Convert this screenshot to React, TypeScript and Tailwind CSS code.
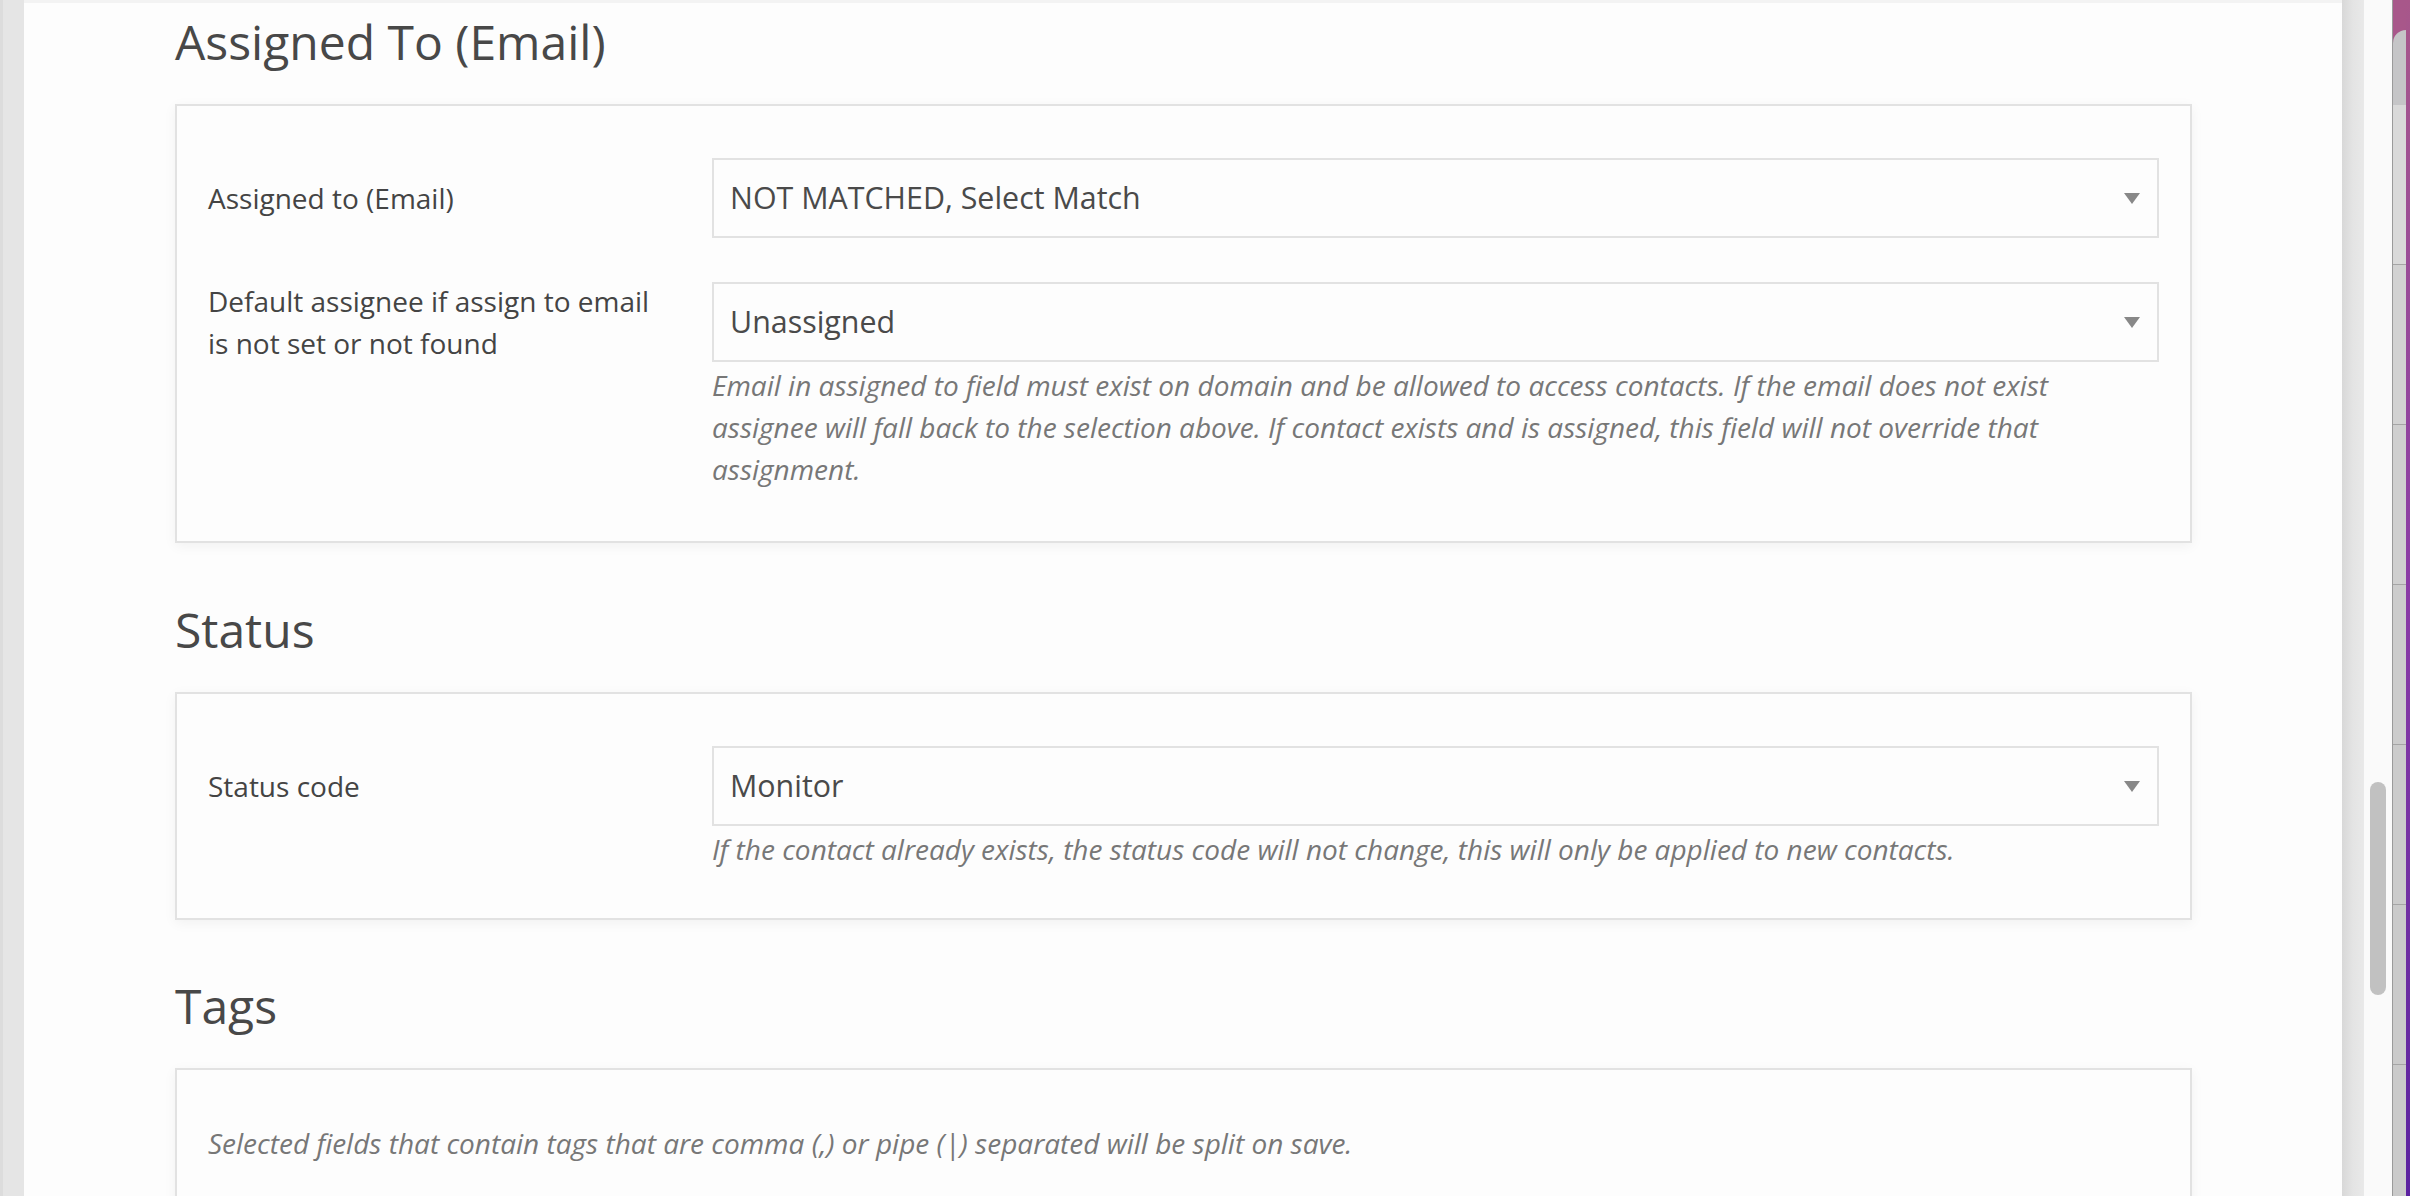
import React from "react";

const Arrow = () => (
  <svg width="16" height="11" viewBox="0 0 16 11" className="shrink-0">
    <path d="M0 0H16L8 11Z" fill="#888888" />
  </svg>
);

function Select({ value }: { value: string }) {
  return (
    <div className="flex h-[80px] items-center justify-between border-2 border-[#e2e2e2] bg-[#fdfdfd] pl-[16px] pr-[17px] text-[30.4px] text-[#4a4a4a]">
      <span>{value}</span>
      <Arrow />
    </div>
  );
}

function Row({
  label,
  value,
  help,
}: {
  label: React.ReactNode;
  value: string;
  help?: string;
}) {
  return (
    <div className="flex">
      <div className="flex h-[80px] w-[504px] shrink-0 items-center pr-[44px] text-[28px] leading-[42px] text-[#444]">
        <span>{label}</span>
      </div>
      <div className="min-w-0 flex-1">
        <Select value={value} />
        {help && (
          <p className="mt-[2px] text-[28px] italic leading-[42px] text-[#777]">{help}</p>
        )}
      </div>
    </div>
  );
}

function Heading({ children }: { children: React.ReactNode }) {
  return (
    <h3 className="mb-[32px] text-[48px] font-normal leading-[60px] text-[#484848]">{children}</h3>
  );
}

function Card({ children, pb }: { children: React.ReactNode; pb: string }) {
  return (
    <div
      className={`w-[2017px] border-2 border-[#e2e2e2] bg-[#fdfdfd] px-[31px] pt-[52px] shadow-[0_3px_12px_rgba(0,0,0,0.05)] ${pb}`}
    >
      {children}
    </div>
  );
}

export default function App() {
  return (
    <div className="flex h-[1196px] w-[2410px] overflow-hidden bg-[#fdfdfd] font-['Open_Sans',sans-serif]">
      {/* left strip */}
      <div className="h-full w-[24px] shrink-0 border-l-[3px] border-[#dcdcdc] bg-[#e5e5e5]" />

      {/* main */}
      <div className="h-full flex-1 border-t-[3px] border-[#f3f3f3] pl-[151px] pt-[9px]">
        <Heading>Assigned To (Email)</Heading>
        <Card pb="pb-[51px]">
          <div className="flex flex-col gap-[44px]">
            <Row label="Assigned to (Email)" value="NOT MATCHED, Select Match" />
            <Row
              label="Default assignee if assign to email is not set or not found"
              value="Unassigned"
              help="Email in assigned to field must exist on domain and be allowed to access contacts. If the email does not exist assignee will fall back to the selection above. If contact exists and is assigned, this field will not override that assignment."
            />
          </div>
        </Card>

        <div className="mt-[57px]">
          <Heading>Status</Heading>
          <Card pb="pb-[48px]">
            <Row
              label="Status code"
              value="Monitor"
              help="If the contact already exists, the status code will not change, this will only be applied to new contacts."
            />
          </Card>
        </div>

        <div className="mt-[56px]">
          <Heading>Tags</Heading>
          <Card pb="pb-[60px]">
            <p className="text-[28px] italic leading-[42px] text-[#777]">
              Selected fields that contain tags that are comma (,) or pipe (|) separated will be split on save.
            </p>
          </Card>
        </div>
      </div>

      {/* right edge of window */}
      <div className="h-full w-[22px] shrink-0 bg-linear-to-r from-[#d8d8d8] via-[#e4e4e4] to-[#e9e9e9]" />
      <div className="flex h-full w-[28px] shrink-0 flex-col bg-[#fafafa] pl-[6px]">
        <div className="h-[782px]" />
        <div className="h-[213px] w-[16px] rounded-full bg-[#c1c1c1]" />
      </div>

      {/* background window */}
      <div className="flex h-full w-[18px] shrink-0">
        <div className="flex h-full w-[14px] flex-col border-l border-[#9a9a9a] bg-[#a8578a]">
          <div className="h-[30px]" />
          <div className="h-[75px] rounded-tl-[14px] bg-[#c5c5c7]" />
          <div className="h-[160px] border-b border-[#a5a5a5] bg-[#d9d9d9]" />
          <div className="h-[160px] border-b border-[#a5a5a5] bg-[#d2d2d2]" />
          <div className="h-[160px] border-b border-[#a5a5a5] bg-[#cfcfcf]" />
          <div className="h-[160px] border-b border-[#a5a5a5] bg-[#cccccc]" />
          <div className="h-[160px] border-b border-[#a5a5a5] bg-[#cbcbcb]" />
          <div className="h-[160px] border-b border-[#a5a5a5] bg-[#cacaca]" />
          <div className="flex-1 bg-[#cacaca]" />
        </div>
        <div className="h-full w-[4px] bg-linear-to-b from-[#a8578a] via-[#8a3aa6] to-[#5b22a0]" />
      </div>
    </div>
  );
}
